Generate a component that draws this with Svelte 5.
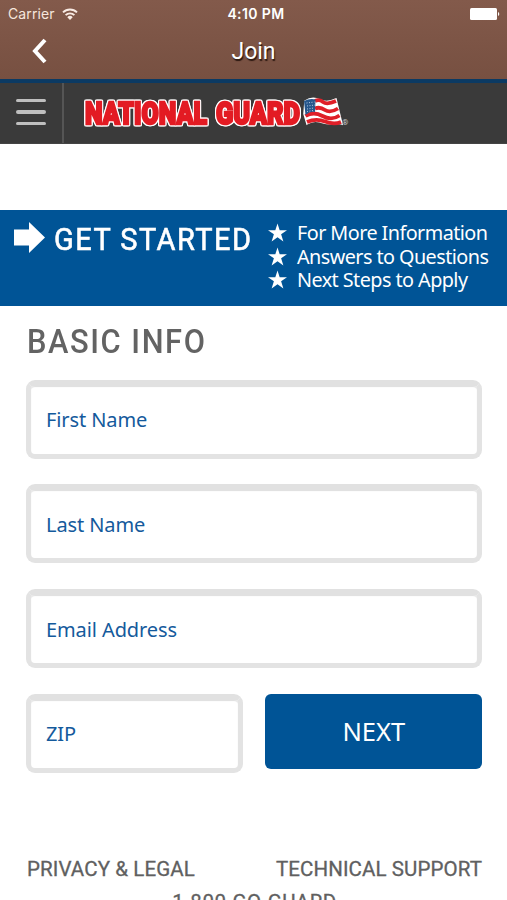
<script>
    let menuOpen = false;
    let firstName = "";
    let lastName = "";
    let email = "";
    let zip = "";

    const perks = [
        "For More Information",
        "Answers to Questions",
        "Next Steps to Apply",
    ];

    function toggleMenu() {
        menuOpen = !menuOpen;
    }
</script>

<div class="screen">
    <header class="top">
        <div class="status">
            <div class="carrier">
                <span>Carrier</span>
                <svg width="16" height="12" viewBox="0 0 16 12">
                    <path d="M1 4.4a10 10 0 0 1 14 0" />
                    <path d="M3.6 7.2a6.2 6.2 0 0 1 8.8 0" />
                    <path class="dot" d="M8 12L5.3 9.2a3.8 3.8 0 0 1 5.4 0z" />
                </svg>
            </div>
            <span class="time">4:10 PM</span>
            <svg class="battery" width="30" height="12" viewBox="0 0 30 12">
                <rect width="27" height="12" rx="1.5" />
                <path d="M28 4a2.2 2.2 0 0 1 0 4z" />
            </svg>
        </div>
        <div class="nav">
            <svg class="back" width="18" height="26" viewBox="0 0 18 26">
                <path d="M15 2L5 13l10 11" />
            </svg>
            <h1>Join</h1>
        </div>
    </header>

    <div class="brand">
        <button class="burger" aria-label="Menu" on:click={toggleMenu}>
            <i></i>
            <i></i>
            <i></i>
        </button>
        <svg class="logo" width="290" height="44" viewBox="0 -4 290 44">
            <g class="wordmark">
                <text x="5" y="29" textLength="122" lengthAdjust="spacingAndGlyphs">NATIONAL</text>
                <text x="136" y="29" textLength="84" lengthAdjust="spacingAndGlyphs">GUARD</text>
            </g>
            <g transform="translate(223 3)">
                <path
                    class="flag-edge"
                    d="M2 3C8-1 13 0 17 2s10 2 16-1l6 25c-6-2-12 1-18-1s-11-3-17 1L1 16z"
                />
                <path
                    class="stripe"
                    d="M12 3q4-2 8 1t13-1M12 10.500q5-2 10 1.500t13-1.500M2.500 18q8-5 17 0t17-.5M4 24q9-4 18-.5t16 .5"
                />
                <path class="canton" d="M1 3Q7 0 12.500 1.500L12 14Q7 13 2.500 17z" />
                <path class="stars" d="M3.500 5l8-1M4 8l8-1M4 11l7-1M4 13.500l6-1" />
            </g>
            <text class="reg" x="262" y="30">®</text>
        </svg>
    </div>

    <section class="banner">
        <div class="started">
            <svg width="31" height="31" viewBox="0 0 31 31">
                <path d="M0 7.5h15V0l16 15.5L15 31v-7.5H0z" />
            </svg>
            <h2>GET STARTED</h2>
        </div>
        <ul>
            {#each perks as perk}
                <li>
                    <svg width="19" height="19" viewBox="0 0 20 19">
                        <path d="M10 0l2.3 7H20l-6.2 4.4L16.2 19 10 14.4 3.8 19l2.4-7.600L0 7h7.7z" />
                    </svg>
                    <span>{perk}</span>
                </li>
            {/each}
        </ul>
    </section>

    <form on:submit|preventDefault>
        <h3>BASIC INFO</h3>
        <input placeholder="First Name" bind:value={firstName} />
        <input placeholder="Last Name" bind:value={lastName} />
        <input placeholder="Email Address" bind:value={email} />
        <div class="row">
            <input placeholder="ZIP" bind:value={zip} />
            <button class="next">NEXT</button>
        </div>
    </form>

    <footer>
        <div class="links">
            <span class="privacy">PRIVACY &amp; LEGAL</span>
            <span class="support">TECHNICAL SUPPORT</span>
        </div>
        <div class="phone">1-800-GO-GUARD</div>
    </footer>
</div>

<style>
    :global(body) {
        margin: 0;
        background: #fff;
    }

    .screen {
        width: 507px;
        height: 900px;
        overflow: hidden;
        background: #fff;
        font-family: "Noto Sans", sans-serif;
    }

    .screen * {
        box-sizing: border-box;
    }

    h1,
    h2,
    h3,
    ul {
        margin: 0;
        padding: 0;
    }

    svg {
        display: block;
        flex: none;
    }

    .top {
        height: 79px;
        background: linear-gradient(#835a4b, #775041);
        color: #fff;
    }

    .status {
        display: grid;
        grid-template-columns: 1fr auto 1fr;
        align-items: center;
        height: 27px;
        padding: 0 7px 0 8px;
        font: 14px/27px Inter, sans-serif;
    }

    .carrier {
        display: flex;
        align-items: center;
        gap: 7px;
        color: #f6e6dd;
        letter-spacing: 0.1px;
    }

    .carrier path {
        fill: none;
        stroke: #f9ebe4;
        stroke-width: 1.9;
    }

    .carrier .dot {
        fill: #f9ebe4;
        stroke: none;
    }

    .time {
        padding-left: 4px;
        font-weight: 600;
        letter-spacing: 0.4px;
    }

    .battery {
        justify-self: end;
        fill: #fff;
    }

    .nav {
        display: grid;
        grid-template-columns: 1fr auto 1fr;
        align-items: center;
        height: 49px;
    }

    .nav::after {
        content: "";
    }

    .back {
        margin: -1px 0 0 30px;
    }

    .back path {
        fill: none;
        stroke: #fff;
        stroke-width: 4;
    }

    h1 {
        font: 23px/49px Roboto, sans-serif;
        text-shadow: 1px 2px 1px #2b1710;
    }

    .brand {
        display: flex;
        align-items: center;
        height: 65px;
        background: #3a3a3a;
        border-top: 4px solid #0b3a63;
        border-bottom: 1px solid #444;
    }

    .burger {
        display: flex;
        flex-direction: column;
        justify-content: center;
        align-items: center;
        gap: 8px;
        width: 64px;
        height: 60px;
        padding: 0 0 2px;
        background: none;
        border: 0;
        border-right: 2px solid #555;
    }

    .burger i {
        width: 30px;
        height: 3.4px;
        border-radius: 2px;
        background: #bfbfbf;
    }

    .logo {
        margin: 0 0 1px 16px;
        overflow: visible;
    }

    /* red outline fattens the letters, the shadows make the white rim */
    .wordmark text {
        font: 900 32px Roboto, sans-serif;
        fill: #e31b23;
        stroke: #e31b23;
        stroke-width: 2.4;
    }

    .wordmark {
        filter: drop-shadow(1px 0 0 #fff) drop-shadow(-1px 0 0 #fff)
            drop-shadow(0 1px 0 #fff) drop-shadow(0 -1px 0 #fff);
    }

    .flag-edge {
        fill: #fff;
        stroke: #fff;
        stroke-width: 1.5;
    }

    .stripe {
        fill: none;
        stroke: #df1f28;
        stroke-width: 3.8;
    }

    .canton {
        fill: #26578c;
    }

    .stars {
        fill: none;
        stroke: #b8cbe0;
        stroke-width: 1;
        stroke-dasharray: 1 1.5;
    }

    .reg {
        font: 8px Roboto, sans-serif;
        fill: #ccc;
    }

    .banner {
        display: flex;
        justify-content: space-between;
        height: 96px;
        margin-top: 66px;
        padding: 11px 18px 0 14px;
        background: #005496;
        color: #fff;
    }

    .started {
        display: flex;
        gap: 9px;
        width: 238px;
        height: 34px;
        padding-top: 1px;
    }

    .started svg,
    li svg {
        fill: #fff;
    }

    h2,
    h3 {
        transform: scaleX(0.92);
        transform-origin: left;
        white-space: nowrap;
    }

    h2 {
        font: 31.5px/35px Roboto, sans-serif;
        letter-spacing: 1.6px;
        -webkit-text-stroke: 0.6px #fff;
    }

    ul {
        width: 221px;
        list-style: none;
    }

    li {
        display: flex;
        align-items: center;
        gap: 10px;
        height: 23.5px;
        font-size: 19.8px;
        letter-spacing: -0.55px;
        white-space: nowrap;
    }

    form {
        display: flex;
        flex-direction: column;
        padding: 16px 25.5px 0 26px;
    }

    h3 {
        height: 57.5px;
        padding-left: 1px;
        font: 500 33.5px/40px Roboto, sans-serif;
        color: #636363;
        letter-spacing: 1.7px;
    }

    input {
        width: 100%;
        height: 79px;
        margin: 0 0 25.8px;
        padding: 0 15px;
        border: 5px solid #e3e3e3;
        border-top: 6px solid #e1e1e1;
        border-radius: 9px;
        background: #fff;
        box-shadow: inset 0 1px 1px #dedede;
        color: #005496;
        font: 20px "Noto Sans", sans-serif;
        letter-spacing: -0.1px;
        outline: none;
    }

    input::placeholder {
        color: #145a9c;
        opacity: 1;
    }

    .row {
        display: grid;
        grid-template-columns: 216.5px 216.5px;
        justify-content: space-between;
    }

    .next {
        height: 75px;
        padding: 0 0 0 1px;
        border: 0;
        border-radius: 6px;
        background: #005496;
        color: #fff;
        font: 25.5px "Noto Sans", sans-serif;
    }

    footer {
        padding: 58px 25px 0 27px;
        color: #606060;
        font: 20.5px/24px Roboto, sans-serif;
        -webkit-text-stroke: 0.3px #606060;
    }

    .links {
        display: flex;
        justify-content: space-between;
        letter-spacing: 0.1px;
    }

    .phone {
        margin-top: 9px;
        text-align: center;
        letter-spacing: 0.5px;
    }
</style>
